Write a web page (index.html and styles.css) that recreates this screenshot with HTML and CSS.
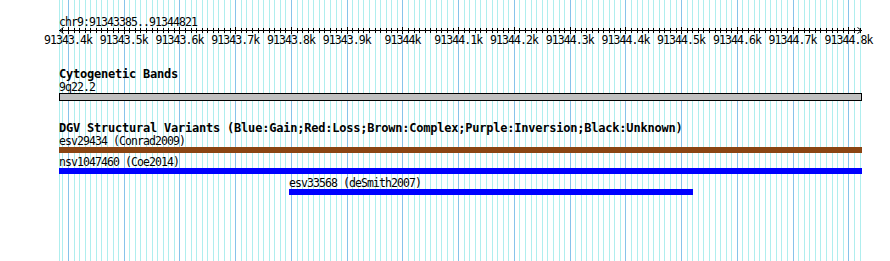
FILE: index.html
```html
<!DOCTYPE html>
<html>
<head>
<meta charset="utf-8">
<link rel="stylesheet" href="styles.css">
</head>
<body>
<div class="page">
  <svg class="grid" id="grid" width="890" height="261"></svg>
  <div class="content">
    <div class="coord">chr9:91343385..91344821</div>
    <svg class="ruler" id="ruler" width="890" height="20">
      <g class="axis">
        <rect x="59" y="3" width="803" height="1"/>
        <path d="M63.5 0.5 L59.5 3.5 L63.5 6.5" />
        <path d="M857.5 0.5 L861.5 3.5 L857.5 6.5" />
      </g>
      <g id="ticks"></g>
      <g class="labels">
        <text x="68" y="17">91343.4k</text>
        <text x="123.7" y="17">91343.5k</text>
        <text x="179.5" y="17">91343.6k</text>
        <text x="235.2" y="17">91343.7k</text>
        <text x="291" y="17">91343.8k</text>
        <text x="346.7" y="17">91343.9k</text>
        <text x="402.4" y="17">91344k</text>
        <text x="458.2" y="17">91344.1k</text>
        <text x="513.9" y="17">91344.2k</text>
        <text x="569.7" y="17">91344.3k</text>
        <text x="625.4" y="17">91344.4k</text>
        <text x="681.1" y="17">91344.5k</text>
        <text x="736.9" y="17">91344.6k</text>
        <text x="792.6" y="17">91344.7k</text>
        <text x="848.4" y="17">91344.8k</text>
      </g>
    </svg>

    <section class="track cyto">
      <h2 class="track-title">Cytogenetic Bands</h2>
      <div class="feat-label">9q22.2</div>
      <div class="band"></div>
    </section>

    <section class="track dgv">
      <h2 class="track-title">DGV Structural Variants (Blue:Gain;Red:Loss;Brown:Complex;Purple:Inversion;Black:Unknown)</h2>
      <div class="feature">
        <div class="feat-label">esv29434 (Conrad2009)</div>
        <div class="bar complex" style="margin-left:59px;width:803px"></div>
      </div>
      <div class="feature">
        <div class="feat-label">nsv1047460 (Coe2014)</div>
        <div class="bar gain" style="margin-left:59px;width:803px"></div>
      </div>
      <div class="feature">
        <div class="feat-label" style="padding-left:289px">esv33568 (deSmith2007)</div>
        <div class="bar gain" style="margin-left:289px;width:404px"></div>
      </div>
    </section>
  </div>
</div>
<script src="script.js"></script>
</body>
</html>
```

FILE: styles.css
```css
html, body {
  margin: 0;
  padding: 0;
  background: #ffffff;
}

.page {
  position: relative;
  width: 890px;
  height: 261px;
  overflow: hidden;
  background: #ffffff;
  font-family: "DejaVu Sans Mono", "Liberation Mono", monospace;
  color: #000000;
}

.grid {
  position: absolute;
  left: 0;
  top: 0;
  z-index: 0;
}

.grid .minor { fill: #afeeee; }
.grid .major { fill: #87c3ea; }

.content {
  position: relative;
  z-index: 1;
  display: flex;
  flex-direction: column;
  padding-top: 16px;
}

.coord,
.feat-label {
  font-size: 11.5px;
  letter-spacing: -0.92px;
  white-space: nowrap;
}

.coord {
  line-height: 13px;
  height: 13px;
  padding-left: 59px;
  margin-bottom: -2px;
}

.ruler {
  display: block;
  overflow: visible;
}

.ruler .axis rect { fill: #000; }
.ruler .axis path { fill: none; stroke: #000; stroke-width: 1; }
.ruler #ticks rect { fill: #000; }
.ruler .labels text {
  font-family: "DejaVu Sans Mono", "Liberation Mono", monospace;
  font-size: 11.5px;
  letter-spacing: -0.92px;
  text-anchor: middle;
  fill: #000;
}

.track {
  display: flex;
  flex-direction: column;
}

.cyto { margin-top: 21px; }
.dgv { margin-top: 21px; }

.track-title {
  margin: 0;
  padding-left: 59px;
  font-size: 12px;
  font-weight: bold;
  letter-spacing: -0.22px;
  line-height: 13px;
  height: 13px;
  white-space: nowrap;
}

.feat-label {
  line-height: 12px;
  height: 12px;
  padding-left: 59px;
}

.band {
  margin-left: 59px;
  width: 803px;
  height: 8px;
  box-sizing: border-box;
  border: 1px solid #000;
  background: #c0c0c0;
}

.feature {
  display: flex;
  flex-direction: column;
  margin-bottom: 3px;
}

.feature .feat-label { padding-left: 59px; }

.bar {
  height: 6px;
}

.bar.complex { background: #8b4513; }
.bar.gain { background: #0000ff; }
```

FILE: script.js
```js
(function () {
  var NS = 'http://www.w3.org/2000/svg';
  var X0 = 68, PX = 0.5574, BP0 = 91343400;
  function xof(bp) { return X0 + (bp - BP0) * PX; }
  var grid = document.getElementById('grid');
  var ticks = document.getElementById('ticks');
  for (var bp = 91343390; bp <= 91344820; bp += 10) {
    var major = bp % 100 === 0;
    var x = Math.round(xof(bp));
    var r = document.createElementNS(NS, 'rect');
    r.setAttribute('x', x);
    r.setAttribute('y', 0);
    r.setAttribute('width', 1);
    r.setAttribute('height', 261);
    r.setAttribute('class', major ? 'major' : 'minor');
    grid.appendChild(r);
    var t = document.createElementNS(NS, 'rect');
    t.setAttribute('x', x);
    t.setAttribute('y', major ? 0 : 1);
    t.setAttribute('width', 1);
    t.setAttribute('height', major ? 7 : 5);
    ticks.appendChild(t);
  }
  var edge = document.createElementNS(NS, 'rect');
  edge.setAttribute('x', 59);
  edge.setAttribute('y', 0);
  edge.setAttribute('width', 1);
  edge.setAttribute('height', 261);
  edge.setAttribute('class', 'minor');
  grid.insertBefore(edge, grid.firstChild);
})();
```
